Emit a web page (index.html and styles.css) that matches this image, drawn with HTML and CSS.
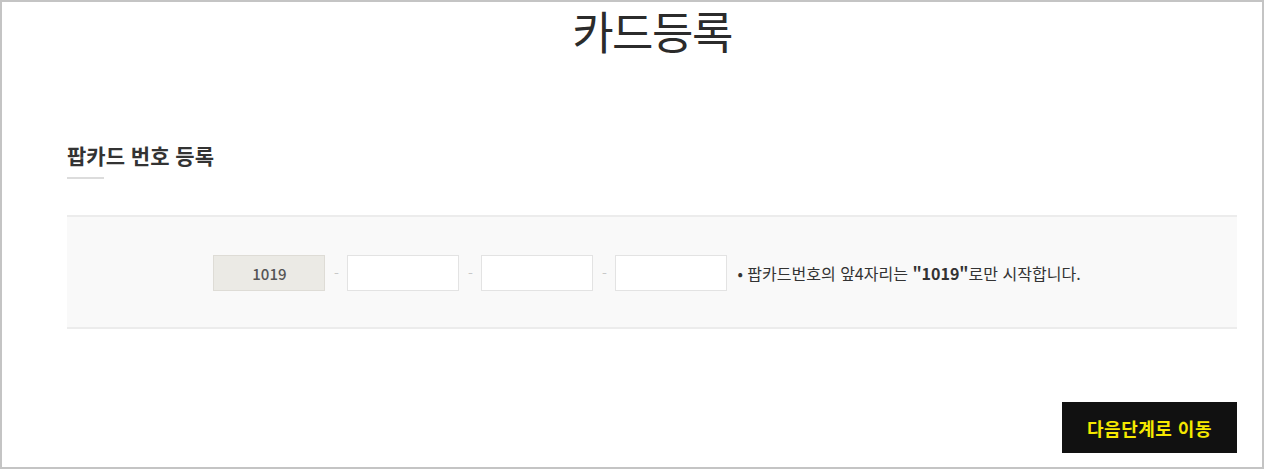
FILE: index.html
```html
<!DOCTYPE html>
<html lang="ko">
<head>
    <meta charset="UTF-8">
    <meta name="viewport" content="width=device-width, initial-scale=1.0">
    <title>카드등록</title>
    <link rel="stylesheet" href="styles.css">
</head>
<body>
    <div class="frame">
        <h1 class="page-title">카드등록</h1>

        <h3 class="sub-title">팝카드 번호 등록</h3>

        <div class="card-box">
            <div class="card-row">
                <input type="text" class="card-num fixed" value="1019" readonly>
                <span class="dash">-</span>
                <input type="text" class="card-num" maxlength="4">
                <span class="dash">-</span>
                <input type="text" class="card-num" maxlength="4">
                <span class="dash">-</span>
                <input type="text" class="card-num" maxlength="4">
                <p class="card-note">• 팝카드번호의 앞4자리는 <b>"1019"</b>로만 시작합니다.</p>
            </div>
        </div>

        <div class="btn-area">
            <button class="next-btn">다음단계로 이동</button>
        </div>
    </div>
</body>
</html>
```
FILE: styles.css
```css
*{
    box-sizing: border-box;
}
body{
    margin: 0;
    font-family: "Noto Sans CJK KR", "Noto Sans", sans-serif;
    color: #333;
    background: #fff;
}
.frame{
    height: 469px;
    border: 2px solid #c4c4c4;
    padding: 0 25px 0 65px;
}
.page-title{
    margin: 0;
    height: 62px;
    line-height: 58px;
    text-align: center;
    font-size: 45px;
    font-weight: 400;
    letter-spacing: -1.5px;
    color: #2b2b2b;
}
.sub-title{
    margin: 76px 0 0 0;
    font-size: 21px;
    line-height: 30px;
    font-weight: bold;
    letter-spacing: 0;
    color: #333;
}
.sub-title::after{
    content: "";
    display: block;
    width: 37px;
    height: 2px;
    margin-top: 7px;
    background: #dcdcdc;
}
.card-box{
    margin-top: 36px;
    height: 114px;
    border-top: 2px solid #ececec;
    border-bottom: 2px solid #ececec;
    background: #f9f9f9;
    padding-top: 38px;
}
.card-row{
    display: flex;
    align-items: center;
    justify-content: center;
    padding-right: 10px;
}
.card-num{
    width: 112px;
    height: 36px;
    border: 1px solid #e3e3e3;
    background: #fff;
    font-family: inherit;
    font-size: 14px;
    color: #555;
    text-align: center;
    outline: none;
}
.card-num.fixed{
    background: #ebeae5;
    border-color: #dedcd6;
    color: #555;
    font-size: 15px;
    font-weight: 500;
}
.dash{
    width: 22px;
    text-align: center;
    color: #c8c8c8;
    font-size: 14px;
}
.card-note{
    margin: 0 0 0 10px;
    font-size: 16px;
    letter-spacing: 0;
    color: #333;
}
.card-note b{
    font-weight: bold;
}
.btn-area{
    display: flex;
    justify-content: flex-end;
    margin-top: 73px;
}
.next-btn{
    width: 175px;
    height: 51px;
    border: 0;
    background: #111;
    color: #f5e800;
    font-family: inherit;
    font-size: 18px;
    font-weight: bold;
    letter-spacing: 0.5px;
    cursor: pointer;
}
```
